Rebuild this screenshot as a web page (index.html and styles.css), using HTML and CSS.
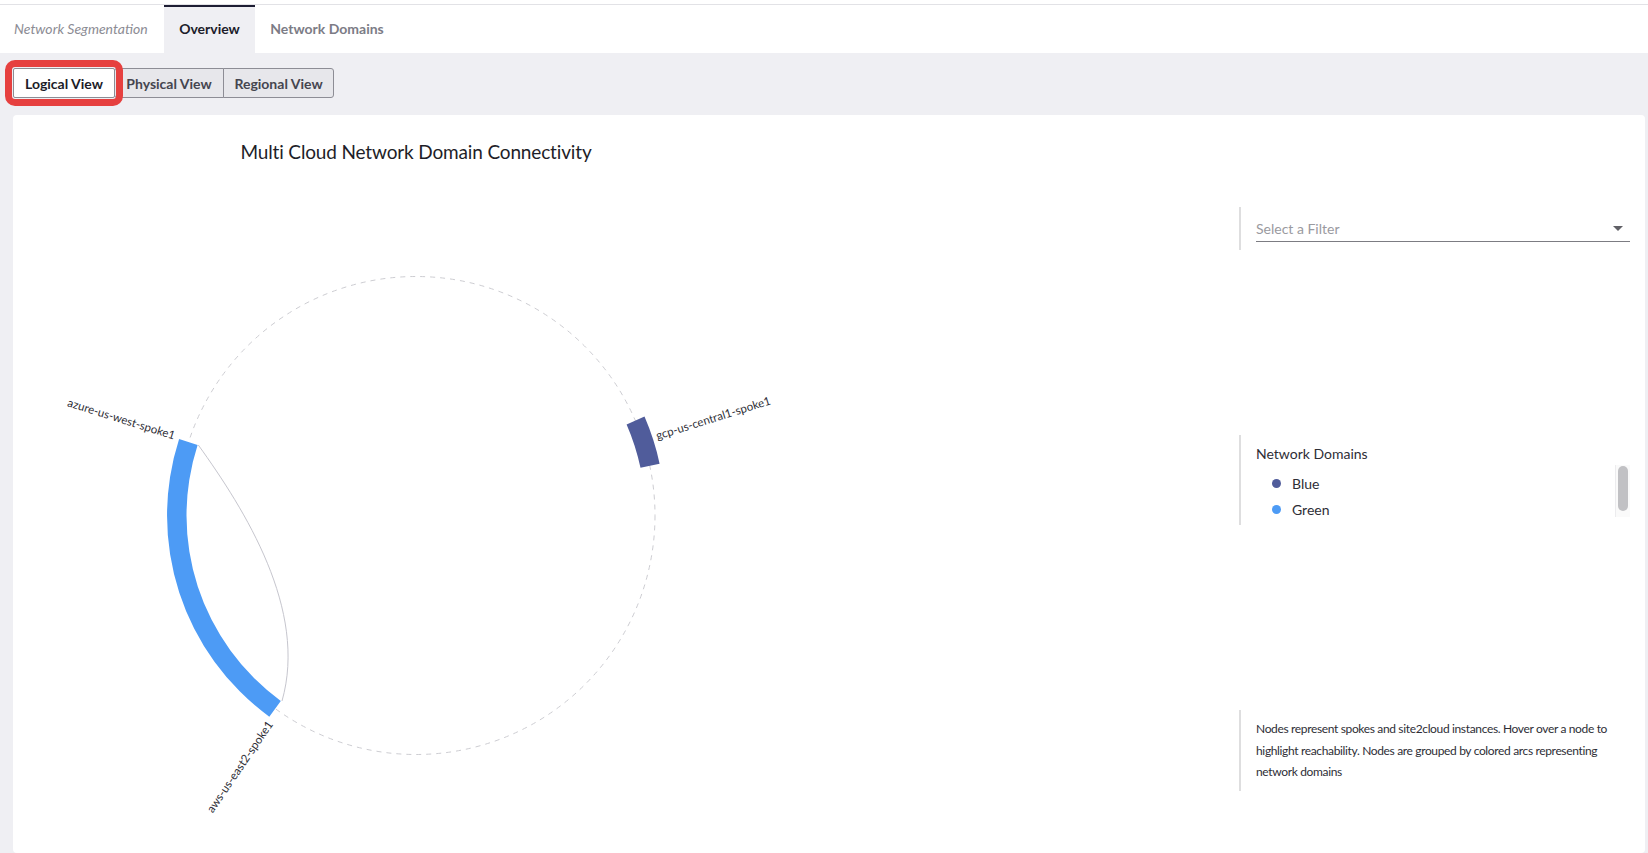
FILE: index.html
```html
<!DOCTYPE html>
<html lang="en">
<head>
<meta charset="utf-8">
<title>Network Segmentation - Overview</title>
<link rel="stylesheet" href="styles.css">
</head>
<body>
<header class="header">
  <nav class="tabs">
    <div class="tab tab-title">Network Segmentation</div>
    <div class="tab tab-active">Overview</div>
    <div class="tab tab-domains">Network Domains</div>
  </nav>
</header>
<main class="content">
  <div class="view-switch">
    <button class="vbtn vbtn-logical vbtn-active">Logical View</button>
    <button class="vbtn vbtn-physical">Physical View</button>
    <button class="vbtn vbtn-regional">Regional View</button>
  </div>
  <section class="card">
    <div class="chart">
      <h2 class="chart-title">Multi Cloud Network Domain Connectivity</h2>
      <svg class="chart-svg" width="806" height="689" viewBox="0 0 806 689">
        <g transform="translate(403,351.5)">
          <circle class="ring" cx="0" cy="0" r="239"></circle>
          <path class="chord" d="M-217.7,-70.5 C-171,-5.5 -108,94.5 -134,185.5"></path>
          <path class="arc arc-green" d="M-146.7,201.2 A249,249 0 0 1 -236.9,-76.5 L-218.4,-70.5 A229.5,229.5 0 0 0 -135.2,185.4 Z"></path>
          <path class="arc arc-blue" d="M228.5,-98.9 A249,249 0 0 1 243.6,-51.8 L224.5,-47.7 A229.5,229.5 0 0 0 210.6,-91.1 Z"></path>
          <text class="node-label" text-anchor="end" transform="rotate(197.4) translate(254,0) rotate(180)">azure-us-west-spoke1</text>
          <text class="node-label" text-anchor="start" transform="rotate(-17.4) translate(253,0)">gcp-us-central1-spoke1</text>
          <text class="node-label" text-anchor="end" transform="rotate(124.3) translate(253,0) rotate(180)">aws-us-east2-spoke1</text>
        </g>
      </svg>
    </div>
    <aside class="side">
      <div class="panel panel-filter">
        <div class="select">
          <span class="select-placeholder">Select a Filter</span>
          <span class="caret"></span>
        </div>
      </div>
      <div class="panel panel-legend">
        <div class="legend-title">Network Domains</div>
        <div class="legend-body">
          <ul class="legend-list">
            <li class="legend-item"><span class="dot dot-blue"></span>Blue</li>
            <li class="legend-item"><span class="dot dot-green"></span>Green</li>
          </ul>
          <div class="scrollbar"><div class="scroll-thumb"></div></div>
        </div>
      </div>
      <div class="panel panel-desc">
        <p class="desc-text">Nodes represent spokes and site2cloud instances. Hover over a node to highlight reachability. Nodes are grouped by colored arcs representing network domains</p>
      </div>
    </aside>
  </section>
</main>
</body>
</html>
```

FILE: styles.css
```css
* {
  box-sizing: border-box;
}

html, body {
  margin: 0;
  padding: 0;
  height: 853px;
  overflow: hidden;
}

body {
  background: #efeff3;
  font-family: Lato, "Noto Sans", sans-serif;
  color: #2a2a33;
}

.header {
  background: #ffffff;
  padding-top: 4px;
}

.tabs {
  display: flex;
  height: 49px;
  border-top: 1px solid #e2e2e6;
  background: #ffffff;
}

.tab {
  height: 48px;
  line-height: 48px;
  font-size: 14px;
  font-weight: 700;
  color: #7c7c86;
  text-align: center;
}

.tab-title {
  width: 164px;
  padding-left: 14px;
  text-align: left;
  font-style: italic;
  font-weight: 400;
  color: #8c8c94;
}

.tab-active {
  width: 91px;
  height: 49px;
  background: #efeff3;
  color: #1c1c2a;
  box-shadow: inset 0 2px 0 #1d1d33;
}

.tab-domains {
  width: 144px;
}

.content {
  padding: 15px 3px 0 13px;
}

.view-switch {
  display: flex;
  height: 30px;
  margin-bottom: 17px;
}

.vbtn {
  height: 30px;
  padding: 0;
  font-family: Lato, "Noto Sans", sans-serif;
  font-size: 14px;
  font-weight: 700;
  color: #45454f;
  background: #e7e7eb;
  border: 1px solid #8d8d95;
  border-radius: 0;
}

.vbtn-logical {
  width: 102px;
  border-radius: 2px;
}

.vbtn-physical {
  width: 110px;
  margin-left: -1px;
  border-radius: 3px 0 0 3px;
}

.vbtn-regional {
  width: 111px;
  margin-left: -1px;
  border-radius: 0 3px 3px 0;
}

.vbtn-active {
  position: relative;
  z-index: 1;
  background: #ffffff;
  color: #1c1c28;
  outline: 7px solid #e6403f;
  outline-offset: 1px;
}

.card {
  display: flex;
  height: 738px;
  background: #ffffff;
  border-radius: 4px;
}

.chart {
  width: 806px;
  display: flex;
  flex-direction: column;
}

.chart-title {
  margin: 0;
  padding-top: 25px;
  height: 49px;
  line-height: 24px;
  font-size: 19px;
  letter-spacing: -0.15px;
  font-weight: 400;
  color: #1e1e28;
  text-align: center;
}

.chart-svg {
  display: block;
}

.ring {
  fill: none;
  stroke: #cdcdd2;
  stroke-width: 1;
  stroke-dasharray: 5 5;
}

.chord {
  fill: none;
  stroke: #c6c6ce;
  stroke-width: 1;
}

.arc-green {
  fill: #4d9bf5;
}

.arc-blue {
  fill: #505c9b;
}

.node-label {
  font-family: Lato, "Noto Sans", sans-serif;
  font-size: 11.5px;
  fill: #2e2e36;
}

.side {
  width: 394px;
  margin-left: auto;
  margin-right: 12px;
  display: flex;
  flex-direction: column;
}

.panel {
  border-left: 2px solid #dededf;
  padding-left: 15px;
  padding-right: 3px;
}

.panel-filter {
  margin-top: 92px;
  height: 43px;
}

.select {
  height: 35px;
  padding-top: 9px;
  border-bottom: 1px solid #7c7c82;
  display: flex;
  align-items: center;
  justify-content: space-between;
}

.select-placeholder {
  font-size: 14px;
  line-height: 20px;
  color: #9a9aa0;
}

.caret {
  width: 0;
  height: 0;
  margin-right: 7px;
  border-left: 5px solid transparent;
  border-right: 5px solid transparent;
  border-top: 5px solid #606066;
}

.panel-legend {
  margin-top: 185px;
  height: 90px;
}

.legend-title {
  padding-top: 9px;
  line-height: 20px;
  font-size: 14px;
  color: #2e2e36;
}

.legend-body {
  display: flex;
  height: 52px;
  margin-top: 1px;
  overflow: hidden;
}

.legend-list {
  flex: 1;
  list-style: none;
  margin: 0;
  padding: 5px 0 0 0;
}

.legend-item {
  display: flex;
  align-items: center;
  height: 26px;
  padding-left: 16px;
  font-size: 14px;
  color: #2e2e36;
}

.dot {
  width: 9px;
  height: 9px;
  border-radius: 50%;
  margin-right: 11px;
}

.dot-blue {
  background: #505c9b;
}

.dot-green {
  background: #4d9bf5;
}

.scrollbar {
  width: 15px;
  height: 52px;
  background: #fafafa;
  border-left: 1px solid #ececee;
  padding-top: 1px;
}

.scroll-thumb {
  width: 10px;
  height: 45px;
  margin: 0 auto;
  border-radius: 5px;
  background: #c1c1c4;
}

.panel-desc {
  margin-top: 185px;
  height: 81px;
  padding-top: 8px;
  padding-right: 0;
}

.desc-text {
  margin: 0;
  font-size: 12px;
  letter-spacing: -0.35px;
  line-height: 21.5px;
  color: #2e2e36;
}
```
